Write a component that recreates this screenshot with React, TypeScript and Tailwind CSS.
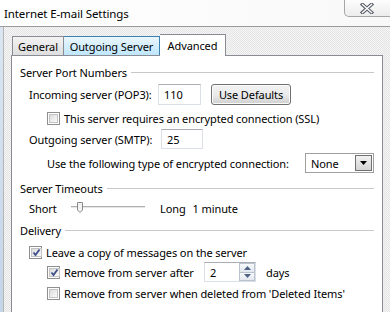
import React from "react";

const font = { fontFamily: '"Noto Sans", "Open Sans", sans-serif' };

const Check = ({ checked }: { checked?: boolean }) => (
  <span className="w-[13px] h-[13px] shrink-0 border border-[#8e8f8f] bg-white p-[1px] flex">
    <span className="flex-1 border border-[#c4c4c4] bg-gradient-to-br from-[#dcdcdc] to-[#fafafa] flex items-center justify-center">
      {checked && (
        <svg width="9" height="9" viewBox="0 0 9 9">
          <path d="M1.5 4.5 L3.5 7 L7.5 1.5" fill="none" stroke="#3c4f8c" strokeWidth="1.8" />
        </svg>
      )}
    </span>
  </span>
);

const GroupHeader = ({ label }: { label: string }) => (
  <div className="flex items-center gap-[4px] h-[16px] pl-[8px] pr-[8px]">
    <span>{label}</span>
    <span className="flex-1 border-t border-[#c8c8c8]" />
  </div>
);

const TextBox = ({ value, className = "" }: { value: string; className?: string }) => (
  <div
    className={`h-full border border-[#dbdfe6] border-t-[#abadb3] bg-white flex items-center pl-[5px] ${className}`}
  >
    {value}
  </div>
);

export default function App() {
  return (
    <div
      className="w-[390px] h-[312px] overflow-hidden bg-white text-[11px] tracking-[-0.1px] text-black leading-none whitespace-nowrap"
      style={font}
    >
      {/* title bar */}
      <div className="h-[26px] flex justify-between items-start bg-gradient-to-r from-[#ffffff] to-[#f8f8f8]">
        <div className="pl-[4px] pt-[8px] text-[11.5px]">Internet E-mail Settings</div>
        <div className="w-[46px] h-[17px] border-l border-b border-[#a5a5a5] rounded-bl-[5px] bg-gradient-to-b from-[#fdfdfd] to-[#ececec] flex items-center justify-center pr-[2px]">
          <svg width="14" height="11" viewBox="0 0 14 11">
            <path d="M2.5 1.5 L11.5 9.5 M11.5 1.5 L2.5 9.5" stroke="#5a5f6a" strokeWidth="3.6" strokeLinecap="square" />
            <path d="M2.5 1.5 L11.5 9.5 M11.5 1.5 L2.5 9.5" stroke="#ffffff" strokeWidth="1.4" strokeLinecap="square" />
          </svg>
        </div>
      </div>

      {/* body */}
      <div className="flex h-[286px] border-t border-[#9a9a9a]">
        <div className="w-[3px] bg-gradient-to-b from-[#dbe6f2] to-[#c4d5e8]" />
        <div className="flex-1 border-l border-[#b5b5b5] bg-[conic-gradient(#e4e4e4_25%,#f6f6f6_0_50%,#e4e4e4_0_75%,#f6f6f6_0)] bg-size-[2px_2px] pt-[7px] pl-[7px] pr-[7px] flex flex-col">
          {/* tabs */}
          <div className="flex items-end h-[21px] pl-[1px] relative z-10">
            <div className="h-[19px] w-[52px] border border-b-0 border-[#898c95] bg-gradient-to-b from-[#f3f3f3] to-[#dedede] flex items-center justify-center">
              General
            </div>
            <div className="h-[19px] w-[96px] border border-b-0 border-l-0 border-[#3c7fb1] bg-gradient-to-b from-[#eaf6fd] to-[#bee6fd] flex items-center justify-center">
              Outgoing Server
            </div>
            <div className="h-[22px] w-[66px] -mb-[1px] border border-b-0 border-l-0 border-[#898c95] bg-white flex items-center justify-center pb-[1px]">
              Advanced
            </div>
          </div>

          {/* panel */}
          <div className="flex-1 border border-b-0 border-[#898c95] bg-white flex flex-col">
            <div className="mt-[8px]">
              <GroupHeader label="Server Port Numbers" />
            </div>

            <div className="mt-[4px] h-[21px] flex items-center pl-[17px]">
              <span className="w-[129px]">Incoming server (POP3):</span>
              <TextBox value="110" className="w-[43px]" />
              <div className="ml-[10px] w-[80px] h-[21px] border border-[#707070] rounded-[3px] bg-gradient-to-b from-[#f2f2f2] via-[#ebebeb] to-[#cfcfcf] flex items-center justify-center shadow-[inset_0_0_0_1px_#fcfcfc]">
                Use Defaults
              </div>
            </div>

            <div className="mt-[6px] h-[14px] flex items-center gap-[4px] pl-[35px]">
              <Check />
              <span>This server requires an encrypted connection (SSL)</span>
            </div>

            <div className="mt-[4px] h-[20px] flex items-center pl-[17px]">
              <span className="w-[132px]">Outgoing server (SMTP):</span>
              <TextBox value="25" className="w-[42px]" />
            </div>

            <div className="mt-[4px] h-[20px] flex items-center pl-[35px] pr-[8px]">
              <span className="flex-1">Use the following type of encrypted connection:</span>
              <div className="w-[69px] h-[20px] border border-[#a0a0a0] bg-white flex items-center pl-[5px] pr-[1px]">
                <span className="flex-1">None</span>
                <div className="w-[17px] h-[16px] border border-[#707070] bg-gradient-to-b from-[#f2f2f2] to-[#d4d4d4] flex items-center justify-center">
                  <svg width="7" height="4" viewBox="0 0 7 4">
                    <path d="M0 0 H7 L3.5 4 Z" fill="#000" />
                  </svg>
                </div>
              </div>
            </div>

            <div className="mt-[7px]">
              <GroupHeader label="Server Timeouts" />
            </div>

            <div className="mt-[4px] h-[16px] flex items-center pl-[17px]">
              <span className="w-[42px]">Short</span>
              <svg width="74" height="12" viewBox="0 0 74 12" className="shrink-0">
                <rect x="0" y="4" width="74" height="1" fill="#b0b0b0" />
                <rect x="0" y="5" width="74" height="1" fill="#e6e6e6" />
                <path d="M6.5 0.5 H11.5 V8 L9 10.5 L6.5 8 Z" fill="#f2f2f2" stroke="#8a8a8a" />
              </svg>
              <span className="ml-[15px]">Long</span>
              <span className="ml-[7px]">1 minute</span>
            </div>

            <div className="mt-[6px]">
              <GroupHeader label="Delivery" />
            </div>

            <div className="mt-[7px] h-[14px] flex items-center gap-[4px] pl-[17px]">
              <Check checked />
              <span>Leave a copy of messages on the server</span>
            </div>

            <div className="mt-[3px] h-[20px] flex items-center pl-[35px]">
              <Check checked />
              <span className="ml-[4px] w-[140px]">Remove from server after</span>
              <div className="w-[52px] h-[20px] border border-[#dbdfe6] border-t-[#abadb3] bg-white flex">
                <span className="flex-1 flex items-center pl-[5px]">2</span>
                <div className="w-[16px] flex flex-col">
                  <div className="flex-1 border border-[#b9c2cf] bg-gradient-to-b from-[#f7f9fb] to-[#e3e8ef] flex items-center justify-center">
                    <svg width="7" height="4" viewBox="0 0 7 4">
                      <path d="M0 4 H7 L3.5 0 Z" fill="#4d6185" />
                    </svg>
                  </div>
                  <div className="flex-1 border border-t-0 border-[#b9c2cf] bg-gradient-to-b from-[#f7f9fb] to-[#e3e8ef] flex items-center justify-center">
                    <svg width="7" height="4" viewBox="0 0 7 4">
                      <path d="M0 0 H7 L3.5 4 Z" fill="#4d6185" />
                    </svg>
                  </div>
                </div>
              </div>
              <span className="ml-[10px]">days</span>
            </div>

            <div className="mt-[4px] h-[14px] flex items-center gap-[4px] pl-[35px]">
              <Check />
              <span>Remove from server when deleted from 'Deleted Items'</span>
            </div>
          </div>
        </div>
      </div>
    </div>
  );
}
